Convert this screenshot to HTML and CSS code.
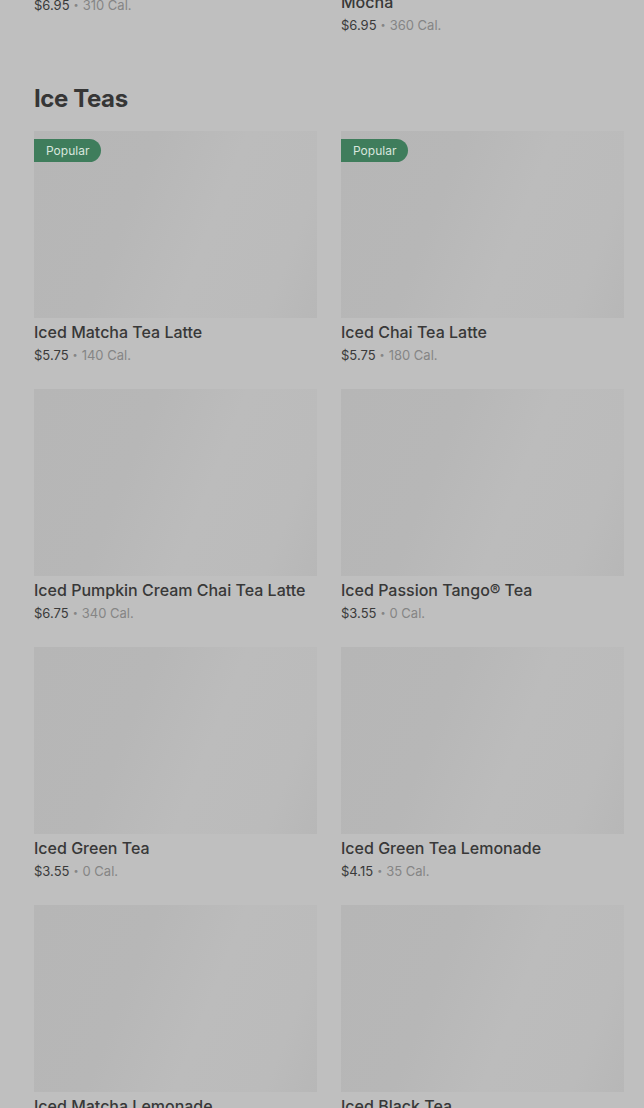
FILE: index.html
```html
<!DOCTYPE html>
<html lang="en">
<head>
<meta charset="utf-8">
<title>Menu - Ice Teas</title>
<link rel="stylesheet" href="styles.css">
</head>
<body>
<main class="menu">
  <section class="section section-prev">
    <div class="grid">
      <article class="card text-only">
        <h3 class="card-title">Iced Caffè Mocha</h3>
        <p class="card-meta"><span class="price">$6.95</span><span class="sep">•</span><span class="cal">310 Cal.</span></p>
      </article>
      <article class="card text-only">
        <h3 class="card-title">Iced Peppermint White Chocolate Mocha</h3>
        <p class="card-meta"><span class="price">$6.95</span><span class="sep">•</span><span class="cal">360 Cal.</span></p>
      </article>
    </div>
  </section>

  <section class="section">
    <h2 class="section-title">Ice Teas</h2>
    <div class="grid">
      <article class="card">
        <div class="thumb"><span class="badge">Popular</span></div>
        <h3 class="card-title">Iced Matcha Tea Latte</h3>
        <p class="card-meta"><span class="price">$5.75</span><span class="sep">•</span><span class="cal">140 Cal.</span></p>
      </article>
      <article class="card">
        <div class="thumb"><span class="badge">Popular</span></div>
        <h3 class="card-title">Iced Chai Tea Latte</h3>
        <p class="card-meta"><span class="price">$5.75</span><span class="sep">•</span><span class="cal">180 Cal.</span></p>
      </article>
      <article class="card">
        <div class="thumb"></div>
        <h3 class="card-title">Iced Pumpkin Cream Chai Tea Latte</h3>
        <p class="card-meta"><span class="price">$6.75</span><span class="sep">•</span><span class="cal">340 Cal.</span></p>
      </article>
      <article class="card">
        <div class="thumb"></div>
        <h3 class="card-title">Iced Passion Tango® Tea</h3>
        <p class="card-meta"><span class="price">$3.55</span><span class="sep">•</span><span class="cal">0 Cal.</span></p>
      </article>
      <article class="card">
        <div class="thumb"></div>
        <h3 class="card-title">Iced Green Tea</h3>
        <p class="card-meta"><span class="price">$3.55</span><span class="sep">•</span><span class="cal">0 Cal.</span></p>
      </article>
      <article class="card">
        <div class="thumb"></div>
        <h3 class="card-title">Iced Green Tea Lemonade</h3>
        <p class="card-meta"><span class="price">$4.15</span><span class="sep">•</span><span class="cal">35 Cal.</span></p>
      </article>
      <article class="card">
        <div class="thumb"></div>
        <h3 class="card-title">Iced Matcha Lemonade</h3>
        <p class="card-meta"><span class="price">$5.25</span><span class="sep">•</span><span class="cal">100 Cal.</span></p>
      </article>
      <article class="card">
        <div class="thumb"></div>
        <h3 class="card-title">Iced Black Tea</h3>
        <p class="card-meta"><span class="price">$3.55</span><span class="sep">•</span><span class="cal">0 Cal.</span></p>
      </article>
    </div>
  </section>
</main>
</body>
</html>
```

FILE: styles.css
```css
* { box-sizing: border-box; }

html, body {
  margin: 0;
  padding: 0;
  background: #bfbfbf;
}

body {
  font-family: Inter, "Noto Sans", "Liberation Sans", sans-serif;
  color: #383838;
  overflow: hidden;
  height: 1108px;
}

.menu {
  padding: 0 20px 0 34px;
}

.section-prev {
  margin-top: -32px;
}

.section + .section {
  margin-top: 48px;
}

.section-title {
  margin: 0 0 16px;
  font-size: 24px;
  line-height: 32px;
  font-weight: 700;
  color: #363636;
  letter-spacing: -0.4px;
}

.grid {
  display: grid;
  grid-template-columns: 1fr 1fr;
  column-gap: 24px;
  row-gap: 24px;
  align-items: start;
}

.card {
  display: flex;
  flex-direction: column;
  min-width: 0;
}

.thumb {
  position: relative;
  height: 187px;
  flex: 0 0 187px;
  background: linear-gradient(112deg, #b6b6b6 0%, #b7b7b7 35%, #bcbcbc 60%, #bbbbbb 85%, #b7b7b7 100%);
}

.badge {
  position: absolute;
  top: 8px;
  left: 0;
  height: 23px;
  padding: 0 12px;
  border-radius: 0 12px 12px 0;
  background: #3f7d5c;
  color: #d9e6de;
  font-size: 12px;
  line-height: 23px;
  font-weight: 400;
}

.card-title {
  margin: 4px 0 0;
  font-size: 16px;
  line-height: 20px;
  font-weight: 500;
  color: #383838;
}

.card-meta {
  margin: 3px 0 0;
  height: 20px;
  font-size: 13px;
  line-height: 20px;
  color: #858585;
}

.price {
  color: #3a3a3a;
}

.sep {
  display: inline-block;
  margin: 0 4px;
  font-size: 9px;
  line-height: 1;
  vertical-align: 2px;
}

.cal {
  color: #858585;
}
```
